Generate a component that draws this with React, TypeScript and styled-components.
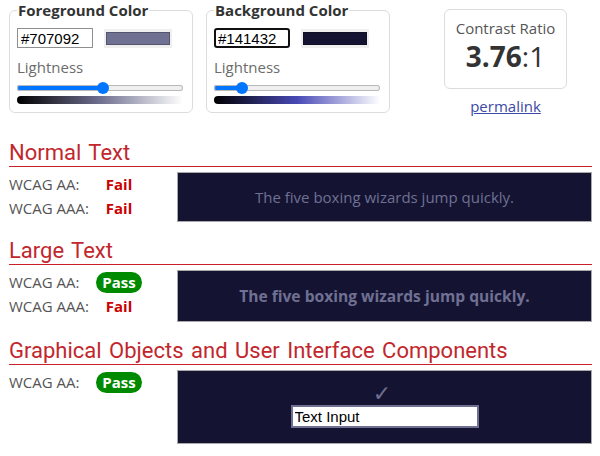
import React from "react";
import styled, { createGlobalStyle } from "styled-components";

const GlobalStyle = createGlobalStyle`
  html, body { margin: 0; padding: 0; background: #fff; }
  body {
    font-family: "Open Sans", "Liberation Sans", sans-serif;
    color: #333;
  }
`;

const Page = styled.div`
  width: 583px;
  padding: 0 8px 20px 9px;
`;

const TopRow = styled.div`
  display: flex;
  align-items: flex-start;
  margin-bottom: 24px;
`;

const ColorSet = styled.fieldset`
  box-sizing: border-box;
  width: 184px;
  margin: 0;
  padding: 8px 7px 8px;
  border: 1px solid #dcdcdc;
  border-radius: 6px;
  & + & {
    margin-left: 13px;
  }
`;

const Legend = styled.legend`
  padding: 0 1px;
  font-size: 15px;
  line-height: 20px;
  font-weight: 700;
  color: #333;
`;

const InputRow = styled.div`
  display: flex;
  align-items: center;
  gap: 11px;
`;

const HexInput = styled.input<{ $focused?: boolean }>`
  box-sizing: border-box;
  width: 76px;
  height: 20px;
  margin: 0;
  padding: 0 ${(p) => (p.$focused ? 2 : 3)}px;
  border: ${(p) => (p.$focused ? "2px solid #101010" : "1px solid #8f8f8f")};
  border-radius: ${(p) => (p.$focused ? 3 : 0)}px;
  font-family: "Liberation Sans", Arial, sans-serif;
  font-size: 15px;
  color: #000;
  background: #fff;
  outline: none;
`;

const Swatch = styled.div`
  box-sizing: border-box;
  width: 68px;
  height: 19px;
  padding: 3px 2px;
  background: #efefef;
`;

const SwatchFill = styled.div<{ $color: string }>`
  box-sizing: border-box;
  width: 100%;
  height: 100%;
  background: ${(p) => p.$color};
  border: 1px solid rgba(0, 0, 0, 0.25);
`;

const FieldLabel = styled.div`
  margin-top: 9px;
  font-size: 15px;
  line-height: 20px;
  color: #6c6c6c;
`;

const Slider = styled.input<{ $pct: number }>`
  -webkit-appearance: none;
  appearance: none;
  display: block;
  width: 166px;
  height: 12px;
  margin: 5px 0 0;
  padding: 0;
  background: transparent;
  &::-webkit-slider-runnable-track {
    height: 6px;
    border-radius: 3px;
    background: linear-gradient(
      to right,
      #0075ff ${(p) => p.$pct}%,
      #efefef ${(p) => p.$pct}%
    );
    box-shadow: inset 0 0 0 1px #b9b9b9;
  }
  &::-webkit-slider-thumb {
    -webkit-appearance: none;
    width: 12px;
    height: 12px;
    margin-top: -3px;
    border: none;
    border-radius: 50%;
    background: #0075ff;
  }
`;

const LightnessBar = styled.div<{ $mid: string }>`
  width: 166px;
  height: 8px;
  margin-top: 2px;
  border-radius: 4px 0 0 4px;
  background: linear-gradient(to right, #000, ${(p) => p.$mid}, #fff);
`;

const RatioColumn = styled.div`
  width: 123px;
  margin-left: 54px;
  padding-top: 9px;
  display: flex;
  flex-direction: column;
  align-items: center;
`;

const RatioBox = styled.div`
  box-sizing: border-box;
  width: 123px;
  height: 80px;
  padding-top: 8px;
  border: 1px solid #dcdcdc;
  border-radius: 6px;
  text-align: center;
`;

const RatioLabel = styled.div`
  font-size: 15px;
  line-height: 20px;
  color: #555;
`;

const RatioValue = styled.div`
  font-size: 28px;
  line-height: 36px;
  color: #333;
  b {
    font-weight: 700;
  }
  span {
    font-weight: 400;
  }
`;

const Permalink = styled.a`
  margin-top: 7px;
  font-size: 15px;
  line-height: 20px;
  color: #3c4aa5;
  text-decoration: underline;
`;

const Section = styled.section`
  & + & {
    margin-top: 16px;
  }
`;

const Heading = styled.h2`
  margin: 0;
  font-family: Roboto, "Liberation Sans", sans-serif;
  font-size: 22px;
  line-height: 26px;
  font-weight: 400;
  word-spacing: 2px;
  color: rgb(193, 39, 45);
  border-bottom-width: 1px;
  border-bottom-style: solid;
  border-bottom-color: rgb(200, 32, 42);
`;

const SectionBody = styled.div`
  display: grid;
  grid-template-columns: 168px 415px;
  align-items: start;
  margin-top: 5px;
`;

const Results = styled.div`
  display: grid;
  grid-template-columns: 86px 48px;
  grid-auto-rows: 24px;
  align-items: center;
`;

const Criterion = styled.div`
  font-size: 15px;
  line-height: 24px;
  color: #555;
`;

const Verdict = styled.div<{ $pass: boolean }>`
  justify-self: center;
  padding: 0 6px;
  height: 21px;
  line-height: 21px;
  border-radius: 11px;
  font-size: 15px;
  font-weight: 700;
  color: ${(p) => (p.$pass ? "#fff" : "#cc0000")};
  background: ${(p) => (p.$pass ? "#008a00" : "transparent")};
`;

const Sample = styled.div<{ $pad: number; $line: number; $size: number; $bold?: boolean }>`
  box-sizing: border-box;
  padding: ${(p) => p.$pad}px 8px;
  background: #141432;
  border: 1px solid #a9a9a9;
  color: #707092;
  text-align: center;
  font-size: ${(p) => p.$size}px;
  line-height: ${(p) => p.$line}px;
  font-weight: ${(p) => (p.$bold ? 700 : 400)};
`;

const WidgetSample = styled.div`
  box-sizing: border-box;
  height: 74px;
  padding-top: 11px;
  background: #141432;
  border: 1px solid #a9a9a9;
  display: flex;
  flex-direction: column;
  align-items: center;
`;

const Check = styled.div`
  font-family: "DejaVu Sans", sans-serif;
  font-size: 22px;
  line-height: 23px;
  color: #707092;
  margin-right: 5px;
`;

const DemoInput = styled.input`
  box-sizing: border-box;
  width: 188px;
  height: 23px;
  margin: 0;
  padding: 0 2px;
  border: 2px solid #707092;
  background: #fff;
  font-family: "Liberation Sans", Arial, sans-serif;
  font-size: 15px;
  color: #000;
  outline: none;
`;

type Result = { label: string; pass: boolean };

const ResultList = ({ items }: { items: Result[] }) => (
  <Results>
    {items.map((r) => (
      <React.Fragment key={r.label}>
        <Criterion>{r.label}</Criterion>
        <Verdict $pass={r.pass}>{r.pass ? "Pass" : "Fail"}</Verdict>
      </React.Fragment>
    ))}
  </Results>
);

const SAMPLE = "The five boxing wizards jump quickly.";

export default function App() {
  return (
    <Page>
      <GlobalStyle />
      <TopRow>
        <ColorSet>
          <Legend>Foreground Color</Legend>
          <InputRow>
            <HexInput defaultValue="#707092" />
            <Swatch>
              <SwatchFill $color="#707092" />
            </Swatch>
          </InputRow>
          <FieldLabel>Lightness</FieldLabel>
          <Slider type="range" min={0} max={100} defaultValue={52} $pct={52} />
          <LightnessBar $mid="hsl(240, 13%, 50%)" />
        </ColorSet>
        <ColorSet>
          <Legend>Background Color</Legend>
          <InputRow>
            <HexInput $focused defaultValue="#141432" />
            <Swatch>
              <SwatchFill $color="#141432" />
            </Swatch>
          </InputRow>
          <FieldLabel>Lightness</FieldLabel>
          <Slider type="range" min={0} max={100} defaultValue={14} $pct={17} />
          <LightnessBar $mid="hsl(240, 43%, 50%)" />
        </ColorSet>
        <RatioColumn>
          <RatioBox>
            <RatioLabel>Contrast Ratio</RatioLabel>
            <RatioValue>
              <b>3.76</b>
              <span>:1</span>
            </RatioValue>
          </RatioBox>
          <Permalink href="#">permalink</Permalink>
        </RatioColumn>
      </TopRow>

      <Section>
        <Heading>Normal Text</Heading>
        <SectionBody>
          <ResultList
            items={[
              { label: "WCAG AA:", pass: false },
              { label: "WCAG AAA:", pass: false },
            ]}
          />
          <Sample $pad={14} $line={20} $size={15}>
            {SAMPLE}
          </Sample>
        </SectionBody>
      </Section>

      <Section>
        <Heading>Large Text</Heading>
        <SectionBody>
          <ResultList
            items={[
              { label: "WCAG AA:", pass: true },
              { label: "WCAG AAA:", pass: false },
            ]}
          />
          <Sample $pad={12} $line={26} $size={15.6} $bold>
            {SAMPLE}
          </Sample>
        </SectionBody>
      </Section>

      <Section>
        <Heading>Graphical Objects and User Interface Components</Heading>
        <SectionBody>
          <ResultList items={[{ label: "WCAG AA:", pass: true }]} />
          <WidgetSample>
            <Check>✓</Check>
            <DemoInput readOnly value="Text Input" />
          </WidgetSample>
        </SectionBody>
      </Section>
    </Page>
  );
}
